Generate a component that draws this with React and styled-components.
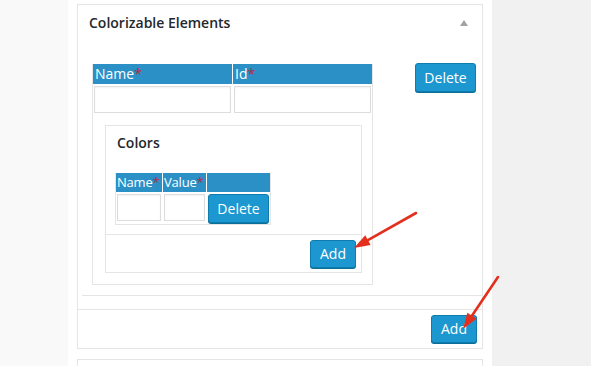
import styled, { createGlobalStyle } from "styled-components";

const Global = createGlobalStyle`
    html, body {
        margin: 0;
        padding: 0;
        background: #f1f1f1;
    }
    body {
        font-family: 'Open Sans', 'Liberation Sans', sans-serif;
        color: #23282d;
    }
`

function Button({children,size}){
    return(
        <ButtonWrapper size={size}>{children}</ButtonWrapper>
    )
}
function Label({children,required,small}){
    return(
        <HeadCell small={small}>{children}{required?(<Star>*</Star>):null}</HeadCell>
    )
}
function Arrow({from,to}){
    let [tx,ty]=from
    let [hx,hy]=to
    let dx=hx-tx, dy=hy-ty
    let len=Math.sqrt(dx*dx+dy*dy)
    let ux=dx/len, uy=dy/len
    let nx=-uy, ny=ux
    let bx=hx-16*ux, by=hy-16*uy
    let pts=`${hx},${hy} ${bx+5.5*nx},${by+5.5*ny} ${bx-5.5*nx},${by-5.5*ny}`
    return(
        <g>
            <line x1={tx} y1={ty} x2={bx} y2={by} stroke="#e3301c" strokeWidth="2.6" strokeLinecap="round"/>
            <polygon points={pts} fill="#e3301c"/>
        </g>
    )
}

export default function App(){
    return(
        <Page>
            <Global/>
            <Gutter/>
            <Column>
                <Panel>
                    <PanelHeader>
                        <Title>Colorizable Elements</Title>
                        <Toggle/>
                    </PanelHeader>
                    <Row>
                        <Table>
                            <HeadRow cols="139px 139px">
                                <Label required>Name</Label>
                                <Label required>Id</Label>
                            </HeadRow>
                            <InputRow cols="139px 139px">
                                <Field><Input/></Field>
                                <Field><Input/></Field>
                            </InputRow>
                            <Nested>
                                <Box>
                                    <BoxTitle>Colors</BoxTitle>
                                    <SmallTable>
                                        <HeadRow cols="46px 43px 63px" small>
                                            <Label required small>Name</Label>
                                            <Label required small>Value</Label>
                                            <HeadCell/>
                                        </HeadRow>
                                        <InputRow cols="46px 43px 63px" small>
                                            <Field><Input/></Field>
                                            <Field><Input/></Field>
                                            <Field><Button size="delete">Delete</Button></Field>
                                        </InputRow>
                                    </SmallTable>
                                    <BoxFooter>
                                        <Button size="add">Add</Button>
                                    </BoxFooter>
                                </Box>
                            </Nested>
                        </Table>
                        <RowAction>
                            <Button size="delete">Delete</Button>
                        </RowAction>
                    </Row>
                    <PanelFooter>
                        <Button size="add">Add</Button>
                    </PanelFooter>
                </Panel>
                <NextPanel/>
            </Column>
            <Side/>
            <Overlay width="591" height="366" viewBox="0 0 591 366">
                <Arrow from={[416,213]} to={[354,248]}/>
                <Arrow from={[498,277]} to={[463,329]}/>
            </Overlay>
        </Page>
    )
}

const Page=styled.div`
    position: relative;
    display: flex;
    height: 366px;
    overflow: hidden;
`
const Gutter=styled.div`
    width: 68px;
    background-color: #f9f9f9;
`
const Column=styled.div`
    width: 424px;
    box-sizing: border-box;
    padding: 4px 9px 0 9px;
    background-color: #FFFFFF;
`
const Side=styled.div`
    flex: 1;
    background-color: #f1f1f1;
`
const Panel=styled.div`
    width: 406px;
    box-sizing: border-box;
    border: 1px solid #e5e5e5;
    background-color: #FFFFFF;
`
const NextPanel=styled(Panel)`
    margin-top: 10px;
    height: 40px;
`
const PanelHeader=styled.div`
    height: 36px;
    display: flex;
    align-items: center;
    justify-content: space-between;
    padding: 0 14px 0 11px;
`
const Title=styled.h2`
    margin: 0;
    font-size: 14px;
    font-weight: 600;
    line-height: 20px;
    color: #23282d;
`
const Toggle=styled.span`
    width: 0;
    height: 0;
    border-left: 4px solid transparent;
    border-right: 4px solid transparent;
    border-bottom: 6px solid #9ea3a8;
`
const Row=styled.div`
    display: flex;
    align-items: flex-start;
    margin-left: 4px;
    padding: 22px 6px 10px 10px;
    border-bottom: 1px solid #e5e5e5;
`
const RowAction=styled.div`
    margin-left: auto;
`
const Table=styled.div`
    width: 281px;
    box-sizing: border-box;
    margin-top: 1px;
    border: 1px solid #e5e5e5;
    border-top: 0;
`
const SmallTable=styled.div`
    width: 156px;
    box-sizing: border-box;
    margin: 20px 0 9px 9px;
    border: 1px solid #e5e5e5;
    border-top: 0;
`
const HeadRow=styled.div`
    display: grid;
    grid-template-columns: ${(props)=>props.cols};
    column-gap: 1px;
    height: ${(props)=>props.small?('19px'):('20px')};
    background-color: #FFFFFF;
`
const HeadCell=styled.div`
    background-color: #2a90c6;
    color: #FFFFFF;
    font-size: ${(props)=>props.small?('13px'):('14px')};
    letter-spacing: ${(props)=>props.small?('-0.2px'):('0')};
    line-height: 19px;
    padding-left: ${(props)=>props.small?('1px'):('2px')};
    white-space: nowrap;
    overflow: hidden;
`
const Star=styled.span`
    color: #b32a44;
`
const InputRow=styled.div`
    display: grid;
    grid-template-columns: ${(props)=>props.cols};
    column-gap: 1px;
    padding: 2px 0 1px;
`
const Field=styled.div`
    padding: 0 1px 0 1px;
    display: flex;
`
const Input=styled.input`
    width: 100%;
    height: 27px;
    box-sizing: border-box;
    border: 1px solid #dddddd;
    box-shadow: inset 0 1px 2px rgba(0,0,0,0.05);
    background: #FFFFFF;
    margin: 0;
`
const Nested=styled.div`
    padding: 11px 10px 11px 12px;
`
const Box=styled.div`
    border: 1px solid #e5e5e5;
`
const BoxTitle=styled.h3`
    margin: 0;
    padding: 7px 11px 0;
    font-size: 14px;
    font-weight: 600;
    line-height: 20px;
    color: #23282d;
`
const BoxFooter=styled.div`
    display: flex;
    justify-content: flex-end;
    border-top: 1px solid #e5e5e5;
    padding: 5px 5px 4px;
`
const PanelFooter=styled.div`
    display: flex;
    justify-content: flex-end;
    margin-top: 13px;
    border-top: 1px solid #e5e5e5;
    padding: 5px 5px 5px;
`
const ButtonWrapper=styled.button`
    box-sizing: border-box;
    height: ${(props)=>props.size==='add'?('28px'):('29px')};
    width: ${(props)=>props.size==='add'?('46px'):('61px')};
    padding: 0;
    background-color: #1c97d0;
    border: 1px solid #0f7cae;
    border-radius: 3px;
    box-shadow: 0 1px 0 #0b6d99;
    color: #FFFFFF;
    font-family: 'Open Sans', 'Liberation Sans', sans-serif;
    font-size: 14px;
    font-weight: 400;
    line-height: 26px;
    display: flex;
    align-items: center;
    justify-content: center;
`
const Overlay=styled.svg`
    position: absolute;
    left: 0;
    top: 0;
    pointer-events: none;
`
